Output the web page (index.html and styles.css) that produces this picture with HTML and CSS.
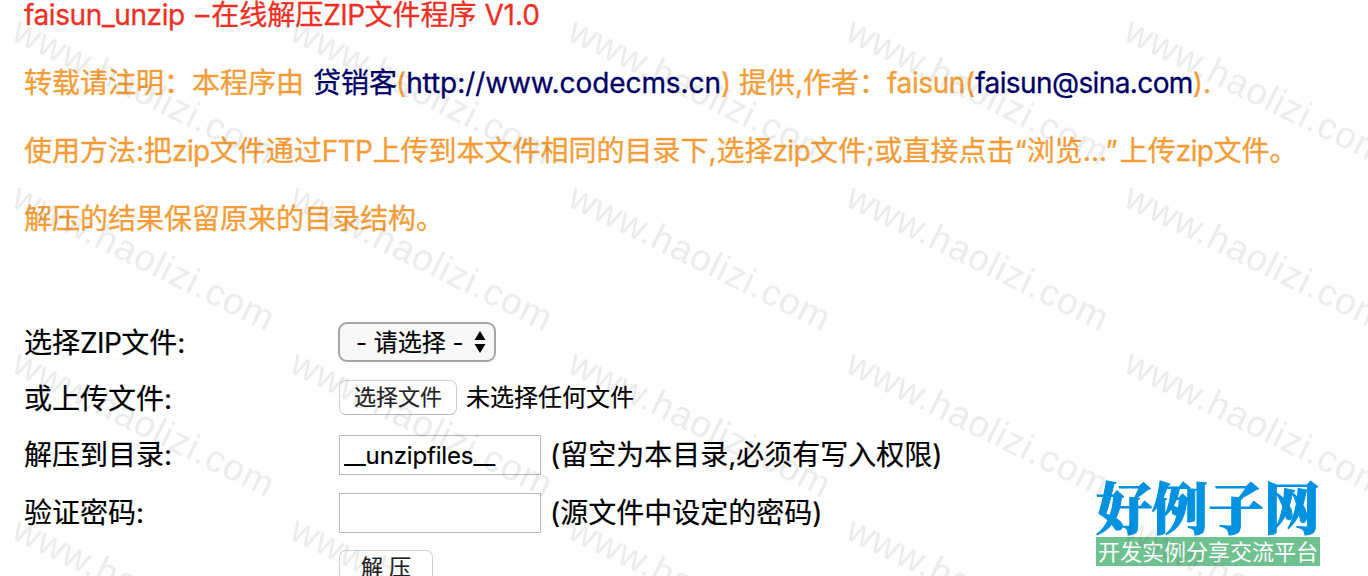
FILE: index.html
```
<!DOCTYPE html>
<html lang="zh-CN">
  <head>
    <meta charset="utf-8">
    <title>faisun_unzip</title>
    <link rel="stylesheet" href="styles.css">
  </head>

  <body>
    <div class="intro">
      <p class="title"><span class="name">faisun_unzip </span><span class="dash">–</span>在线解压<span class="caps">ZIP</span>文件程序 <span class="version">V1.0</span></p>
      <p>转载请注明：本程序由 <a href="#" class="site">贷销客</a>(<a href="#" class="url">http://www.codecms.cn</a>) 提供,作者：<span class="name">faisun</span>(<a href="#" class="mail">faisun@sina.com</a>).</p>
      <p>使用方法:把<span class="zip">zip</span>文件通过<span class="caps">FTP</span>上传到本文件相同的目录下,选择<span class="zip">zip</span>文件;或直接点击“浏览...”<span class="after">上传</span><span class="zip">zip</span>文件。</p>
      <p>解压的结果保留原来的目录结构。</p>
    </div>

    <form class="unzip" action="#">
      <div class="row">
        <label for="zipfile">选择<span class="caps">ZIP</span>文件:</label>
        <div class="select" id="zipfile">
          <span>- 请选择 -</span>
          <svg width="12" height="22" viewBox="0 0 12 22"><path d="M6 0l5.5 9H.5zM6 22L.5 13h11z"/></svg>
        </div>
      </div>
      <div class="row">
        <label for="upfile">或上传文件:</label>
        <button type="button" id="upfile" class="btn">选择文件</button>
        <span class="nofile">未选择任何文件</span>
      </div>
      <div class="row tall">
        <label for="todir">解压到目录:</label>
        <input type="text" id="todir" value="__unzipfiles__">
        <span class="hint">(留空为本目录,必须有写入权限)</span>
      </div>
      <div class="row pass">
        <label for="password">验证密码:</label>
        <input type="password" id="password">
        <span class="hint">(源文件中设定的密码)</span>
      </div>
      <div class="row last">
        <button type="button" class="btn submit">解 压</button>
      </div>
    </form>

    <div class="logo">
      <div class="logo-name">好例子网</div>
      <div class="logo-sub">开发实例分享交流平台</div>
    </div>

    <!-- watermark -->
    <svg class="watermark" width="1368" height="576">
      <defs>
        <pattern id="mark" y="1" width="278" height="166.2" patternUnits="userSpaceOnUse">
          <text transform="translate(10 38) rotate(26.2)" textLength="286">www.haolizi.com</text>
        </pattern>
      </defs>
      <rect width="1368" height="576" fill="url(#mark)"/>
    </svg>
  </body>
</html>
```

FILE: styles.css
```
body {
  margin: 0;
  height: 576px;
  overflow: hidden;
  position: relative;
  background: #fefefe;
  color: #000;
  font: 28px/34px Inter, "Noto Sans CJK SC", sans-serif;
  white-space: nowrap;
}
a {
  color: #000066;
  text-decoration: none;
}

.intro {
  height: 314px;
  padding: 1px 0 0 24px;
  box-sizing: border-box;
  color: #f49d37;
  -webkit-text-stroke: .3px;
}
.intro p {
  margin: 0;
  height: 68px;
  line-height: 28px;
}
.intro .title {
  color: #ee3024;
}
.name {
  letter-spacing: -.4px;
}
.dash {
  margin: 0 2px 0 3px;
}
.caps {
  letter-spacing: -.6px;
}
.version {
  letter-spacing: -.1px;
}
.site {
  margin: 0 -1px 0 1px;
}
.url {
  letter-spacing: -.08px;
}
.mail {
  letter-spacing: -.6px;
}
.zip {
  letter-spacing: -.6px;
}
.after {
  margin-left: 2px;
}

.unzip {
  padding-left: 24px;
  -webkit-text-stroke: .2px;
}
.row {
  display: flex;
  align-items: center;
  height: 56px;
}
.row.tall {
  height: 57px;
}
.row.pass {
  height: 59px;
}
.row.last {
  height: 52px;
  padding-left: 315px;
}
label {
  width: 315px;
  padding-top: 1px;
  box-sizing: border-box;
}
.select {
  display: flex;
  align-items: center;
  justify-content: space-between;
  box-sizing: border-box;
  width: 158px;
  height: 40px;
  margin-left: -1px;
  padding: 2px 8px 0 16px;
  border: 2px solid #a5a5a5;
  border-radius: 9px;
  background: #f8f8f8;
  font-size: 24px;
}
.select svg {
  margin-top: -3px;
}
.btn {
  box-sizing: border-box;
  width: 118px;
  height: 35px;
  margin-top: -2px;
  padding: 0;
  border: 1px solid #d0d0d0;
  border-bottom-color: #b8b8b8;
  border-radius: 7px;
  background: #fff;
  color: #222;
  font: 22px/33px Inter, "Noto Sans CJK SC", sans-serif;
}
.submit {
  width: 94px;
}
.nofile {
  margin-left: 9px;
  font-size: 24px;
}
input {
  box-sizing: border-box;
  width: 202px;
  height: 40px;
  padding: 2px 4px 0;
  border: 1px solid #b8b8b8;
  background: #fff;
  font: 24px Inter, sans-serif;
  letter-spacing: -.15px;
}
.hint {
  margin-left: 9px;
  padding-top: 1px;
}

.logo {
  position: absolute;
  left: 1096px;
  top: 477px;
  width: 224px;
}
.logo-name {
  height: 60px;
  color: #0092e0;
  font: 900 56px/56px "Noto Serif CJK SC", "Noto Sans CJK SC", serif;
  -webkit-text-stroke: 1px;
}
.logo-sub {
  height: 29px;
  background: #70c190;
  color: #fff;
  font: 22px/27px "Noto Sans CJK SC", sans-serif;
  text-align: center;
}

.watermark {
  position: absolute;
  left: 0;
  top: 0;
  pointer-events: none;
}
.watermark text {
  font: 37px "Liberation Sans", sans-serif;
  fill: #000;
  fill-opacity: .075;
}
```
